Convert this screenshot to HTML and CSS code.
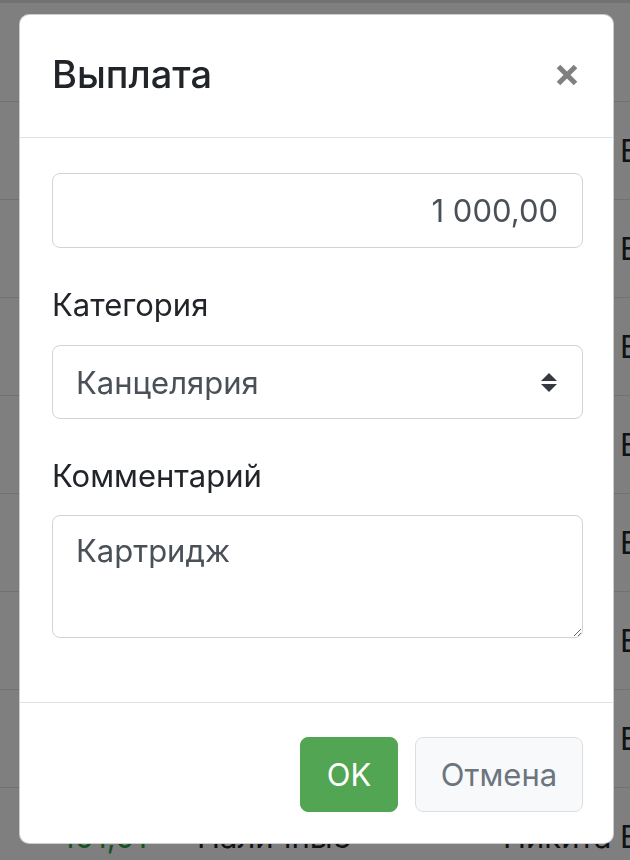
FILE: index.html
```html
<!DOCTYPE html>
<html lang="ru">
<head>
<meta charset="utf-8">
<title>Выплата</title>
<link rel="stylesheet" href="styles.css">
</head>
<body>
<div class="page">
  <div class="list">
    <div class="row row-head"></div>
    <div class="row"><span class="c-sum">250,00</span><span class="c-type">Наличные</span><span class="c-name">Никита Е</span></div>
    <div class="row"><span class="c-sum">120,00</span><span class="c-type">Наличные</span><span class="c-name">Никита Е</span></div>
    <div class="row"><span class="c-sum">300,00</span><span class="c-type">Наличные</span><span class="c-name">Никита Е</span></div>
    <div class="row"><span class="c-sum">75,50</span><span class="c-type">Наличные</span><span class="c-name">Никита Е</span></div>
    <div class="row"><span class="c-sum">410,00</span><span class="c-type">Наличные</span><span class="c-name">Никита Е</span></div>
    <div class="row"><span class="c-sum">99,90</span><span class="c-type">Наличные</span><span class="c-name">Никита Е</span></div>
    <div class="row"><span class="c-sum">500,00</span><span class="c-type">Наличные</span><span class="c-name">Никита Е</span></div>
    <div class="row"><span class="c-sum">101,01</span><span class="c-type">Наличные</span><span class="c-name">Никита Е</span></div>
  </div>
</div>
<div class="backdrop"></div>
<div class="modal">
  <div class="modal-header">
    <h5 class="modal-title">Выплата</h5>
    <button class="close" type="button" aria-label="Закрыть">
      <svg width="24" height="24" viewBox="0 0 24 24"><path d="M3.5 3.5 L20.5 20.5 M20.5 3.5 L3.5 20.5" stroke="#808080" stroke-width="5" stroke-linecap="butt" fill="none"/></svg>
    </button>
  </div>
  <div class="modal-body">
    <input class="form-control amount" type="text" value="1 000,00">
    <label class="label">Категория</label>
    <div class="select-wrap">
      <select class="form-control select"><option>Канцелярия</option></select>
      <svg class="select-arrows" width="16" height="20" viewBox="0 0 16 20"><path d="M8 0 L16 8 L0 8 Z M0 11 L16 11 L8 19 Z" fill="#343a40"/></svg>
    </div>
    <label class="label label-2">Комментарий</label>
    <textarea class="form-control textarea">Картридж</textarea>
  </div>
  <div class="modal-footer">
    <button class="btn btn-ok" type="button">OK</button>
    <button class="btn btn-cancel" type="button">Отмена</button>
  </div>
</div>
</body>
</html>
```
FILE: styles.css
```css
* { box-sizing: border-box; }
html, body {
  margin: 0;
  padding: 0;
  width: 630px;
  height: 860px;
  overflow: hidden;
  background: #fff;
  font-family: Inter, "Noto Sans", sans-serif;
  color: #212529;
}
.page {
  width: 630px;
}
.list {
  display: flex;
  flex-direction: column;
}
.row {
  height: 98px;
  border-bottom: 1px solid #dee2e6;
  display: flex;
  align-items: center;
  font-size: 31px;
  white-space: nowrap;
}
.row-head {
  height: 102px;
  border-top: 3px solid #dee2e6;
}
.c-sum {
  flex: none;
  width: 135px;
  margin-left: 62px;
  color: #28a745;
}
.c-type {
  flex: none;
  width: 306px;
}
.c-name {
  flex: none;
}
.backdrop {
  position: fixed;
  inset: 0;
  background: rgba(0, 0, 0, 0.5);
}
.modal {
  position: fixed;
  left: 19px;
  top: 14px;
  width: 595px;
  background: #fff;
  border: 1px solid rgba(0, 0, 0, 0.2);
  border-radius: 10px;
  display: flex;
  flex-direction: column;
  overflow: hidden;
}
.modal-header {
  display: flex;
  align-items: center;
  justify-content: space-between;
  padding: 34px 34px 37px 32px;
  border-bottom: 1px solid #dee2e6;
}
.modal-title {
  margin: 0;
  font-size: 38px;
  line-height: 51px;
  font-weight: 500;
  color: #212529;
}
.close {
  border: 0;
  background: none;
  padding: 0;
  width: 24px;
  height: 24px;
  display: block;
}
.close svg { display: block; }
.modal-body {
  display: flex;
  flex-direction: column;
  padding: 35px 30px 64px 32px;
}
.form-control {
  display: block;
  width: 100%;
  margin: 0;
  font-family: Inter, "Noto Sans", sans-serif;
  font-size: 31px;
  color: #495057;
  background: #fff;
  border: 1px solid #ced4da;
  border-radius: 8px;
  outline: none;
}
.amount {
  height: 75px;
  text-align: right;
  padding: 0 24px;
}
.label {
  display: block;
  font-size: 31px;
  line-height: 40px;
  margin: 37px 0 20px;
  color: #212529;
}
.label-2 {
  margin-bottom: 19px;
}
.select-wrap {
  position: relative;
}
.select {
  height: 74px;
  padding: 0 60px 0 23px;
  appearance: none;
  -webkit-appearance: none;
}
.select-arrows {
  position: absolute;
  right: 26px;
  top: 28px;
  pointer-events: none;
}
.textarea {
  height: 123px;
  padding: 13px 23px;
  line-height: 44px;
  resize: vertical;
}
.modal-footer {
  display: flex;
  justify-content: flex-end;
  gap: 17px;
  padding: 34px 30px 31px 32px;
  border-top: 1px solid #dee2e6;
}
.btn {
  height: 75px;
  font-family: Inter, "Noto Sans", sans-serif;
  font-size: 31px;
  border-radius: 8px;
  border: 1px solid transparent;
  padding: 0;
}
.btn-ok {
  width: 98px;
  background: #52a552;
  border-color: #52a552;
  color: #fff;
}
.btn-cancel {
  width: 168px;
  background: #f8f9fa;
  border-color: #dcdfe2;
  color: #6c757d;
}
```
